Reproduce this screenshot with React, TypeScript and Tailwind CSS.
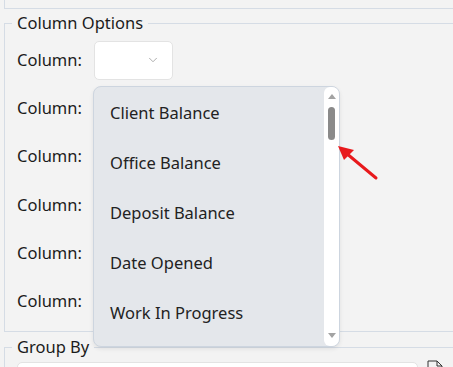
import React from 'react';
import { ChevronDown } from 'lucide-react';

const items = ['Client Balance', 'Office Balance', 'Deposit Balance', 'Date Opened', 'Work In Progress'];

const ColumnRow: React.FC = () => (
  <div className="flex items-center h-[48.2px]">
    <span className="w-[77px] shrink-0">Column:</span>
    <div className="w-[79px] h-[39px] bg-white rounded-[5px] border border-[#e3e3e3] flex items-center justify-end pr-[12px]">
      <ChevronDown size={14} color="#9a9a9a" strokeWidth={1.4} />
    </div>
  </div>
);

const Dropdown: React.FC = () => (
  <div className="absolute left-[93px] top-[86px] w-[247px] h-[261px] rounded-[8px] bg-[#e4e7eb] border border-[#cdd5df] shadow-[0_2px_4px_rgba(0,0,0,0.08)] flex overflow-hidden">
    <ul className="flex-1 pt-[1px]">
      {items.map((it) => (
        <li key={it} className="h-[50px] flex items-center pl-[16px] text-[#222]">
          {it}
        </li>
      ))}
    </ul>
    {/* scrollbar */}
    <div className="w-[15px] bg-white rounded-tl-[6px] rounded-bl-[6px] flex flex-col items-center pt-[7px] pb-[8px]">
      <div className="w-0 h-0 border-l-[4px] border-r-[4px] border-b-[5px] border-l-transparent border-r-transparent border-b-[#a3a3a3]" />
      <div className="mt-[8px] w-[7px] h-[33px] rounded-full bg-[#8a8a8a]" />
      <div className="flex-1" />
      <div className="w-0 h-0 border-l-[4px] border-r-[4px] border-t-[5px] border-l-transparent border-r-transparent border-t-[#a3a3a3]" />
    </div>
  </div>
);

const Arrow: React.FC = () => (
  <svg className="absolute left-[330px] top-[140px]" width="55" height="45" viewBox="0 0 55 45">
    <line x1="46" y1="38" x2="16" y2="13" stroke="#e8191c" strokeWidth="3" strokeLinecap="round" />
    <polygon points="8,6 24,10 14,20" fill="#e8191c" />
  </svg>
);

export default function App() {
  return (
    <div className="relative w-[453px] h-[367px] overflow-hidden bg-[#f3f3f3] text-[16.5px] leading-[22px] text-[#1b1b1b] font-['Noto_Sans',sans-serif]">
      {/* previous section remnant */}
      <div className="ml-[4px] w-[470px] h-[9px] border-l border-b border-[#d5dce5]" />

      {/* Column Options */}
      <fieldset className="mt-[3px] ml-[4px] w-[470px] border border-[#d5dce5] pl-[12px] pb-[6px]">
        <legend className="px-[5px] -ml-[5px]">Column Options</legend>
        <div className="pt-[2px]">
          {[0, 1, 2, 3, 4, 5].map((i) => (
            <ColumnRow key={i} />
          ))}
        </div>
      </fieldset>

      {/* Group By */}
      <fieldset className="mt-[4px] ml-[4px] w-[470px] border border-[#d5dce5] pl-[12px] pb-[4px]">
        <legend className="px-[5px] -ml-[5px]">Group By</legend>
        <div className="flex items-start gap-[9px] pt-[4px]">
          <div className="w-[401px] h-[32px] bg-white rounded-[5px] border border-[#e3e3e3]" />
          <svg width="16" height="20" viewBox="0 0 16 20" className="-mt-[2px]">
            <path d="M1 1h9l5 5v13H1z M10 1v5h5" fill="none" stroke="#333" strokeWidth="1" />
          </svg>
        </div>
      </fieldset>

      <Dropdown />
      <Arrow />
    </div>
  );
}
